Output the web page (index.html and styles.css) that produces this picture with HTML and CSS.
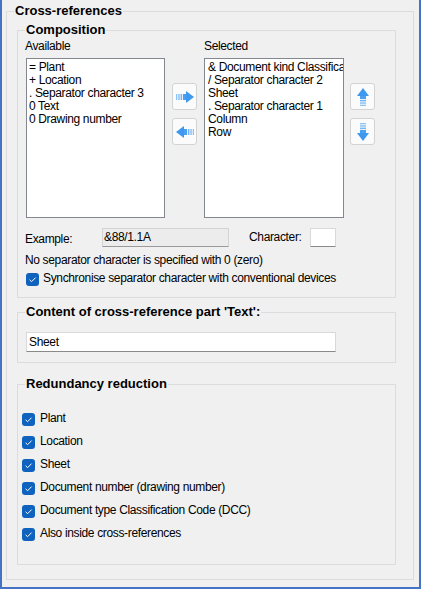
FILE: index.html
```html
<!DOCTYPE html>
<html>
<head>
<meta charset="utf-8">
<link rel="stylesheet" href="styles.css">
</head>
<body>
<div class="window">
  <div class="group outer">
    <div class="group-title">Cross-references</div>

    <div class="group comp">
      <div class="group-title">Composition</div>
      <div class="lists">
        <div class="col">
          <div class="lbl">Available</div>
          <div class="listbox avail">
            <div class="item">= Plant</div>
            <div class="item">+ Location</div>
            <div class="item">. Separator character 3</div>
            <div class="item">0 Text</div>
            <div class="item">0 Drawing number</div>
          </div>
        </div>
        <div class="btncol">
          <button class="abtn">
            <svg class="arrow" width="18" height="12" viewBox="0 0 18 12"><rect x="0" y="3" width="1.3" height="6" fill="#8cc4f5"/><rect x="2.3" y="3" width="1.3" height="6" fill="#7ab9f4"/><rect x="4.6" y="3" width="1.3" height="6" fill="#6aaff2"/><rect x="6.9" y="3" width="3.6" height="6" fill="#4aa0f0"/><polygon points="10,0 18,6 10,12" fill="#3d98ef"/></svg>
          </button>
          <button class="abtn">
            <svg class="arrow left" width="18" height="12" viewBox="0 0 18 12"><rect x="0" y="3" width="1.3" height="6" fill="#8cc4f5"/><rect x="2.3" y="3" width="1.3" height="6" fill="#7ab9f4"/><rect x="4.6" y="3" width="1.3" height="6" fill="#6aaff2"/><rect x="6.9" y="3" width="3.6" height="6" fill="#4aa0f0"/><polygon points="10,0 18,6 10,12" fill="#3d98ef"/></svg>
          </button>
        </div>
        <div class="col sel">
          <div class="lbl">Selected</div>
          <div class="listbox">
            <div class="item">&amp; Document kind Classification</div>
            <div class="item">/ Separator character 2</div>
            <div class="item">Sheet</div>
            <div class="item">. Separator character 1</div>
            <div class="item">Column</div>
            <div class="item">Row</div>
          </div>
        </div>
        <div class="btncol updown">
          <button class="abtn">
            <svg class="arrow up" width="18" height="12" viewBox="0 0 18 12"><rect x="0" y="3" width="1.3" height="6" fill="#8cc4f5"/><rect x="2.3" y="3" width="1.3" height="6" fill="#7ab9f4"/><rect x="4.6" y="3" width="1.3" height="6" fill="#6aaff2"/><rect x="6.9" y="3" width="3.6" height="6" fill="#4aa0f0"/><polygon points="10,0 18,6 10,12" fill="#3d98ef"/></svg>
          </button>
          <button class="abtn">
            <svg class="arrow down" width="18" height="12" viewBox="0 0 18 12"><rect x="0" y="3" width="1.3" height="6" fill="#8cc4f5"/><rect x="2.3" y="3" width="1.3" height="6" fill="#7ab9f4"/><rect x="4.6" y="3" width="1.3" height="6" fill="#6aaff2"/><rect x="6.9" y="3" width="3.6" height="6" fill="#4aa0f0"/><polygon points="10,0 18,6 10,12" fill="#3d98ef"/></svg>
          </button>
        </div>
      </div>

      <div class="example-row">
        <span class="ex-lbl">Example:</span>
        <span class="tb ro">&amp;88/1.1A</span>
        <span class="ch-lbl">Character:</span>
        <span class="tb chbox"></span>
      </div>
      <div class="note">No separator character is specified with 0 (zero)</div>
      <div class="check sync"><span class="cb"><svg width="13" height="13" viewBox="0 0 13 13"><path d="M3.6 6.8 L5.6 8.7 L9.6 4.6" fill="none" stroke="#fff" stroke-width="1"/></svg></span><span>Synchronise separator character with conventional devices</span></div>
    </div>

    <div class="group content">
      <div class="group-title">Content of cross-reference part 'Text':</div>
      <div class="tb text-tb">Sheet</div>
    </div>

    <div class="group redund">
      <div class="group-title">Redundancy reduction</div>
      <div class="checks">
        <div class="check"><span class="cb"><svg width="13" height="13" viewBox="0 0 13 13"><path d="M3.6 6.8 L5.6 8.7 L9.6 4.6" fill="none" stroke="#fff" stroke-width="1"/></svg></span><span>Plant</span></div>
        <div class="check"><span class="cb"><svg width="13" height="13" viewBox="0 0 13 13"><path d="M3.6 6.8 L5.6 8.7 L9.6 4.6" fill="none" stroke="#fff" stroke-width="1"/></svg></span><span>Location</span></div>
        <div class="check"><span class="cb"><svg width="13" height="13" viewBox="0 0 13 13"><path d="M3.6 6.8 L5.6 8.7 L9.6 4.6" fill="none" stroke="#fff" stroke-width="1"/></svg></span><span>Sheet</span></div>
        <div class="check"><span class="cb"><svg width="13" height="13" viewBox="0 0 13 13"><path d="M3.6 6.8 L5.6 8.7 L9.6 4.6" fill="none" stroke="#fff" stroke-width="1"/></svg></span><span>Document number (drawing number)</span></div>
        <div class="check"><span class="cb"><svg width="13" height="13" viewBox="0 0 13 13"><path d="M3.6 6.8 L5.6 8.7 L9.6 4.6" fill="none" stroke="#fff" stroke-width="1"/></svg></span><span>Document type Classification Code (DCC)</span></div>
        <div class="check"><span class="cb"><svg width="13" height="13" viewBox="0 0 13 13"><path d="M3.6 6.8 L5.6 8.7 L9.6 4.6" fill="none" stroke="#fff" stroke-width="1"/></svg></span><span>Also inside cross-references</span></div>
      </div>
    </div>
  </div>
</div>
</body>
</html>
```

FILE: styles.css
```css
* { box-sizing: border-box; }
html, body { margin: 0; padding: 0; }
body {
  background: #f0f0f0;
  font-family: "Liberation Sans", Arial, sans-serif;
  font-size: 12px;
  line-height: 15px;
  letter-spacing: -0.35px;
  color: #000;
}
.window {
  width: 421px;
  height: 589px;
  background: #f0f0f0;
  border-left: 2px solid #4472c4;
  border-right: 2px solid #4472c4;
  border-bottom: 2px solid #4472c4;
  padding: 11px 5px 7px 4px;
  display: flex;
  flex-direction: column;
}
.group {
  border: 1px solid #dcdcdc;
}
.group-title {
  margin: -9px 0 0 0;
  padding: 0 1px;
  width: fit-content;
  background: #f0f0f0;
  font-weight: bold;
  font-size: 13px;
  line-height: 16px;
  letter-spacing: 0;
}
.outer {
  flex: 1;
  padding: 0 17px 0 10px;
}
.outer > .group-title { margin-left: -3px; }
.comp {
  margin-top: 11px;
  padding: 0 0 11px 7px;
}
.lists {
  display: flex;
  margin-top: 1px;
}
.col { width: 140px; }
.lbl { height: 15px; margin-bottom: 4px; }
.listbox {
  height: 160px;
  width: 139px;
  margin-left: 1px;
  background: #fff;
  border: 1px solid #828790;
  padding: 2px 0 0 2px;
  overflow: hidden;
  white-space: nowrap;
  line-height: 13px;
}
.sel .listbox { margin-left: 0; width: 140px; padding-left: 3px; }
.btncol {
  width: 25px;
  margin: 44px 7px 0 7px;
  display: flex;
  flex-direction: column;
  gap: 8px;
}
.updown { margin: 44px 0 0 6px; }
.abtn {
  width: 25px;
  height: 27px;
  padding: 0;
  background: #fbfbfb;
  border: 1px solid #d3d3d3;
  border-radius: 3px;
  display: flex;
  align-items: center;
  justify-content: center;
}
.arrow { display: block; }
.arrow.left { transform: rotate(180deg); }
.arrow.up { transform: rotate(-90deg); }
.arrow.down { transform: rotate(90deg); }
.example-row {
  display: flex;
  align-items: center;
  margin-top: 10px;
  height: 19px;
}
.ex-lbl { width: 77px; padding-top: 3px; }
.tb {
  display: block;
  height: 19px;
  border: 1px solid #d9d9d9;
  border-bottom-color: #8a8a8a;
  background: #fff;
  line-height: 17px;
  padding-left: 1px;
}
.tb.ro { width: 127px; background: #ececec; border-color: #d4d4d4; border-bottom-color: #9a9a9a; }
.ch-lbl { width: 61px; margin-left: 20px; }
.chbox { width: 26px; }
.note { margin-top: 6px; }
.check {
  display: flex;
  align-items: flex-start;
  gap: 4px;
}
.cb {
  width: 13px;
  height: 13px;
  margin-top: 2px;
  background: #0f62bd;
  border-radius: 3px;
  display: block;
  flex: none;
}
.cb svg { display: block; }
.sync { margin-top: 3px; margin-left: 1px; }
.content {
  margin-top: 14px;
  padding: 0 0 10px 8px;
}
.content > .group-title { margin-left: -1px; }
.text-tb {
  margin-top: 12px;
  width: 310px;
  height: 20px;
  line-height: 18px;
  padding-left: 2px;
}
.redund {
  margin-top: 21px;
  padding: 0 0 23px 4px;
}
.redund > .group-title { margin-left: 3px; }
.checks {
  margin-top: 19px;
  display: flex;
  flex-direction: column;
  gap: 8px;
}
.checks .check { gap: 5px; }
```
